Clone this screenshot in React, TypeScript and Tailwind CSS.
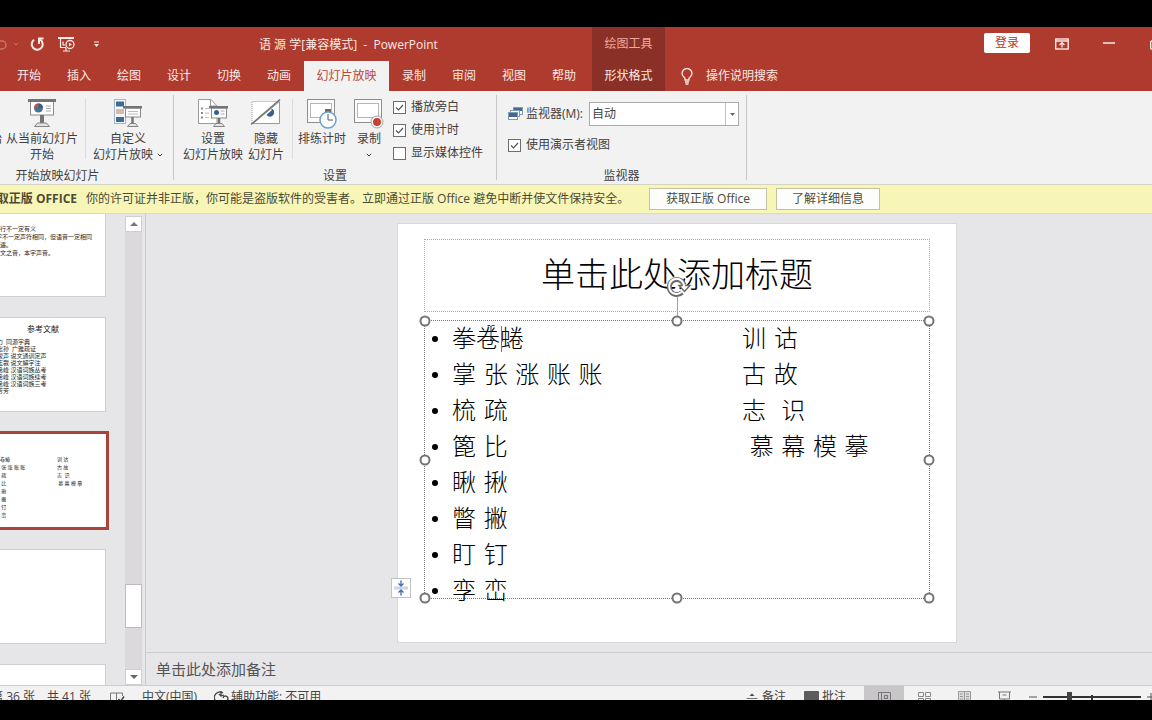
import React from "react";

const UI_FONT = "font-['Open_Sans','Noto_Sans_CJK_SC',sans-serif]";
const SLIDE_FONT = "font-['DejaVu_Serif','Noto_Sans_CJK_SC',serif]";

const TABS_BEFORE = ["开始", "插入", "绘图", "设计", "切换", "动画"];
const TABS_AFTER = ["录制", "审阅", "视图", "帮助"];

const LINES: { left: string; right?: string }[] = [
  { left: "拳卷蜷", right: "训 诂" },
  { left: "掌 张 涨 账 账", right: "古 故" },
  { left: "梳 疏", right: "志  识" },
  { left: "篦 比", right: " 慕 幕 模 摹" },
  { left: "瞅 揪" },
  { left: "瞥 撇" },
  { left: "盯 钉" },
  { left: "孪 峦" },
];

const REFERENCES = [
  "王力  同源字典",
  "王念孙  广雅疏证",
  "朱骏声 说文通训定声",
  "段玉裁 说文解字注",
  "张希峰 汉语词族丛考",
  "张希峰 汉语词族续考",
  "张希峰 汉语词族三考",
  "章芳芳",
];

function Chevron({ className = "" }: { className?: string }) {
  return (
    <svg viewBox="0 0 6 4" width="6" height="4" className={className} aria-hidden="true">
      <path d="M0.8 0.8 L3 3 L5.2 0.8" fill="none" stroke="currentColor" strokeWidth="1" />
    </svg>
  );
}

function Pie({ cx, cy, r }: { cx: number; cy: number; r: number }) {
  return (
    <g>
      <circle cx={cx} cy={cy} r={r} fill="#48729a" />
      <path d={`M${cx} ${cy} V${cy - r} A${r} ${r} 0 0 0 ${cx - r} ${cy} Z`} fill="#c5533c" />
      <path d={`M${cx} ${cy} V${cy - r} A${r} ${r} 0 0 1 ${cx + r} ${cy} Z`} fill="#35618c" />
    </g>
  );
}

function FromCurrentIcon() {
  return (
    <svg width="28" height="28" viewBox="0 0 28 28" aria-hidden="true">
      <rect x="2.5" y="2" width="23" height="14" fill="#fff" stroke="#8a8a8a" />
      <rect x="0" y="0" width="28" height="3" fill="#747474" />
      <Pie cx={10.5} cy={9} r={4.5} />
      <path d="M18 7h5M18 9.500h5M18 12h5" stroke="#aaa" />
      <rect x="12" y="16" width="4" height="8" fill="#747474" />
      <path d="M6.500 27.500 L9.500 24 H18.500 L21.500 27.500 Z" fill="#e3e3e3" stroke="#858585" />
    </svg>
  );
}

function CustomShowIcon() {
  return (
    <svg width="28" height="28" viewBox="0 0 28 28" aria-hidden="true">
      <rect x="0.5" y="0.5" width="11" height="24" fill="#f7f9fc" stroke="#9fb4ca" />
      <rect x="2" y="2.500" width="8" height="5" fill="#42698e" />
      <rect x="2" y="10" width="8" height="5" fill="#d6b9a6" />
      <rect x="2" y="18" width="8" height="5" fill="#42698e" />
      <rect x="11.5" y="9" width="15" height="9" fill="#fff" stroke="#8a8a8a" />
      <rect x="9" y="7" width="19" height="2.500" fill="#747474" />
      <path d="M14 12.500h10M14 15h10" stroke="#bbb" />
      <path d="M18.500 18v6" stroke="#747474" strokeWidth="2.500" />
      <path d="M13.500 27.500 l2.500-3h5.500l2.500 3z" fill="#e3e3e3" stroke="#858585" />
    </svg>
  );
}

function SetupIcon() {
  return (
    <svg width="30" height="28" viewBox="0 0 30 28" aria-hidden="true">
      <path d="M0.500 0.500H13L19 7V24.500H0.500Z" fill="#fff" stroke="#9a9a9a" />
      <path d="M12.500 0.500V7H19" fill="none" stroke="#9a9a9a" />
      <path d="M3 9.500h2M3 14h2M3 18.500h2" stroke="#8a8a8a" strokeWidth="2" />
      <path d="M7 9.500h4M7 14h4M7 18.500h4" stroke="#c0c0c0" />
      <rect x="13.500" y="9" width="15" height="10" fill="#fff" stroke="#8a8a8a" />
      <rect x="11" y="7" width="19" height="2.500" fill="#747474" />
      <circle cx="18.500" cy="13.500" r="2.500" fill="#35618c" />
      <path d="M22.500 12h4M22.500 15h4" stroke="#aaa" />
      <path d="M21 19v5" stroke="#747474" strokeWidth="2.500" />
      <path d="M15.500 27.500l2.500-3h6l2.500 3z" fill="#e3e3e3" stroke="#858585" />
    </svg>
  );
}

function HideIcon() {
  return (
    <svg width="30" height="28" viewBox="0 0 30 28" aria-hidden="true">
      <path d="M1 24V2.500H27" fill="#fff" stroke="#9a9a9a" strokeDasharray="1 1" />
      <path d="M2 24.500L28.500 2.500V24.500Z" fill="#fff" stroke="#9a9a9a" />
      <path d="M20.500 9.500a4.200 4.200 0 1 1-5 6.200L20.500 11.500Z" fill="#35618c" />
      <path d="M0 25.500L29 0.500" stroke="#747474" strokeWidth="1.500" />
    </svg>
  );
}

function RehearseIcon() {
  return (
    <svg width="30" height="30" viewBox="0 0 30 30" aria-hidden="true">
      <rect x="0.500" y="0.500" width="27" height="23" fill="#fbfbfb" stroke="#8e8e8e" />
      <rect x="3.500" y="4.500" width="21" height="14" fill="#fff" stroke="#b5b5b5" />
      <rect x="18" y="10" width="6" height="3" fill="#6b6b6b" />
      <circle cx="21" cy="21" r="8" fill="#fff" stroke="#6fa0c8" strokeWidth="1.500" />
      <path d="M21 15v6h5" fill="none" stroke="#555" />
    </svg>
  );
}

function RecordIcon() {
  return (
    <svg width="30" height="30" viewBox="0 0 30 30" aria-hidden="true">
      <rect x="0.500" y="0.500" width="27" height="23" fill="#fbfbfb" stroke="#8e8e8e" />
      <rect x="3.500" y="4.500" width="21" height="14" fill="#fff" stroke="#b5b5b5" />
      <circle cx="23" cy="23" r="6" fill="#f8f8f8" stroke="#a8a8a8" />
      <circle cx="23" cy="23" r="4" fill="#c8402f" />
    </svg>
  );
}

function RibbonButton({ icon, lines, width, menu }: { icon: React.ReactNode; lines: string[]; width: string; menu?: "side" | "below" }) {
  return (
    <button type="button" className={`flex shrink-0 flex-col items-center whitespace-nowrap ${width}`}>
      <span className="flex h-8 items-start justify-center">{icon}</span>
      {lines.map((line, i) => (
        <span key={line} className="flex h-4 items-center gap-1 leading-4">
          {line}
          {menu === "side" && i === lines.length - 1 && <Chevron />}
        </span>
      ))}
      {menu === "below" && <Chevron className="mt-1.5" />}
    </button>
  );
}

function Check({ id, label, checked }: { id: string; label: string; checked?: boolean }) {
  return (
    <div className="flex items-center gap-[5px]">
      <span className="grid size-[13px] place-items-center">
        <input
          id={id}
          type="checkbox"
          defaultChecked={checked}
          className="peer col-start-1 row-start-1 size-[13px] appearance-none border border-[#6d6d6d] bg-white"
        />
        <svg viewBox="0 0 13 13" className="pointer-events-none col-start-1 row-start-1 hidden size-[13px] peer-checked:block" aria-hidden="true">
          <path d="M3 6.500L5.500 9L10 4" fill="none" stroke="#555" strokeWidth="1.200" />
        </svg>
      </span>
      <label htmlFor={id} className="whitespace-nowrap leading-4">{label}</label>
    </div>
  );
}

function Header() {
  return (
    <header className="shrink-0 overflow-hidden bg-[#ae3b2d] text-xs text-[#fbe9e6]">
      <div className="flex h-[34px]">
        <div className="flex w-[259px] shrink-0 items-center">
          <button type="button" aria-label="撤消" className="-ml-2 w-4 text-[#c9776c]">
            <svg width="16" height="14" viewBox="0 0 16 14" aria-hidden="true">
              <path d="M3 4h7a4 4 0 0 1 0 8H8M6 1L3 4l3 3" fill="none" stroke="currentColor" strokeWidth="1.500" />
            </svg>
          </button>
          <Chevron className="ml-[5px] text-[#c9776c]" />
          <button type="button" aria-label="重复" className="ml-[11px]">
            <svg width="15" height="15" viewBox="0 0 15 15" aria-hidden="true">
              <path d="M4 2.800A5.500 5.500 0 1 0 10 2.500" fill="none" stroke="currentColor" strokeWidth="2" />
              <path d="M13.500 1.500H9V7" fill="none" stroke="currentColor" strokeWidth="2" />
            </svg>
          </button>
          <button type="button" aria-label="从头开始放映" className="ml-[13px]">
            <svg width="18" height="15" viewBox="0 0 18 15" fill="none" stroke="currentColor" aria-hidden="true">
              <path d="M0 1h16" strokeWidth="2" />
              <path d="M2.500 2v8.500H8M5 4.500v3.500h2M8 11v2.500M5 14h7" strokeWidth="1.200" />
              <circle cx="12" cy="7.500" r="4" strokeWidth="1.300" />
              <path d="M11 5.700v3.600l3-1.800z" fill="currentColor" stroke="none" />
            </svg>
          </button>
          <button type="button" aria-label="自定义快速访问工具栏" className="ml-[17px]">
            <svg width="7" height="7" viewBox="0 0 7 7" fill="currentColor" aria-hidden="true">
              <path d="M1 0.500h5v1H1zM1 3h5L3.500 6z" />
            </svg>
          </button>
        </div>
        <h1 className="flex w-[333px] shrink-0 items-center whitespace-pre pt-px">语 源 学[兼容模式]  -  PowerPoint</h1>
        <div className="flex w-[73px] shrink-0 items-center justify-center bg-[#8b3026] text-[#eba99f]">绘图工具</div>
        <div className="-mr-3 flex flex-1 items-center justify-end">
          <button type="button" className="mb-0.5 h-5 w-[46px] rounded-xs bg-white text-[#ae3b2d]">登录</button>
          <button type="button" aria-label="功能区显示选项" className="ml-[25px]">
            <svg width="14" height="12" viewBox="0 0 14 12" fill="none" stroke="currentColor" aria-hidden="true">
              <rect x="0.700" y="1" width="12.500" height="10" strokeWidth="1.400" />
              <path d="M1 3h12M7 9.500V5M4.500 7L7 4.700L9.500 7" strokeWidth="1.300" />
            </svg>
          </button>
          <button type="button" aria-label="最小化" className="ml-[34px] mb-0.5">
            <svg width="12" height="2" viewBox="0 0 12 2" aria-hidden="true"><path d="M0 1h12" stroke="currentColor" strokeWidth="1.500" /></svg>
          </button>
          <button type="button" aria-label="还原" className="ml-[35px]">
            <svg width="14" height="12" viewBox="0 0 14 12" fill="none" stroke="currentColor" aria-hidden="true">
              <rect x="0.700" y="3" width="8" height="8" rx="1" strokeWidth="1.400" />
              <path d="M3 3V1h8v8H9" strokeWidth="1.400" />
            </svg>
          </button>
        </div>
      </div>
      <nav className="flex h-[30px] pl-1">
        {TABS_BEFORE.map((t) => <button key={t} type="button" className="w-[50px] shrink-0">{t}</button>)}
        <button type="button" className="w-[85px] shrink-0 bg-[#f3f2f3] text-[#b5483b]">幻灯片放映</button>
        {TABS_AFTER.map((t) => <button key={t} type="button" className="w-[50px] shrink-0">{t}</button>)}
        <button type="button" className="ml-[3px] w-[73px] shrink-0 bg-[#8b3026]">形状格式</button>
        <button type="button" className="ml-4 flex items-center gap-[13px]">
          <svg width="12" height="17" viewBox="0 0 12 17" fill="none" stroke="currentColor" strokeWidth="1.300" aria-hidden="true">
            <path d="M4 12v-1.500C4 9 1 8.500 1 5.500a5 5 0 0 1 10 0C11 8.500 8 9 8 10.500V12zM4 14h4M4.500 16h3" />
          </svg>
          操作说明搜索
        </button>
      </nav>
    </header>
  );
}

function GroupLabel({ children }: { children: React.ReactNode }) {
  return <div className="mt-auto text-center leading-4">{children}</div>;
}

function Divider() {
  return <div className="mx-1 h-[60px] w-px shrink-0 bg-[#dcdcdc]" />;
}

function Ribbon() {
  return (
    <section className="flex h-[94px] shrink-0 overflow-hidden border-b border-[#d5d3c6] bg-[#f3f2f3] text-xs text-[#3f3f3f]">
      <div className="-ml-[58px] flex w-[231px] shrink-0 flex-col pt-2">
        <div className="flex">
          <RibbonButton icon={<FromCurrentIcon />} lines={["从头开始"]} width="w-[61px] pr-px pl-3" />
          <RibbonButton icon={<FromCurrentIcon />} lines={["从当前幻灯片", "开始"]} width="w-[78px]" />
          <Divider />
          <RibbonButton icon={<CustomShowIcon />} lines={["自定义", "幻灯片放映"]} width="w-[76px]" menu="side" />
        </div>
        <GroupLabel>开始放映幻灯片</GroupLabel>
      </div>
      <div className="my-1 w-px shrink-0 bg-[#c6c6c8]" />
      <div className="flex w-[322px] shrink-0 flex-col pt-2">
        <div className="flex pl-2">
          <RibbonButton icon={<SetupIcon />} lines={["设置", "幻灯片放映"]} width="w-[62px]" />
          <RibbonButton icon={<HideIcon />} lines={["隐藏", "幻灯片"]} width="w-[44px]" />
          <Divider />
          <RibbonButton icon={<RehearseIcon />} lines={["排练计时"]} width="w-[50px]" />
          <RibbonButton icon={<RecordIcon />} lines={["录制"]} width="w-[44px]" menu="below" />
          <div className="ml-0.5 flex flex-col gap-[7px]">
            <Check id="narration" label="播放旁白" checked />
            <Check id="timings" label="使用计时" checked />
            <Check id="media" label="显示媒体控件" />
          </div>
        </div>
        <GroupLabel>设置</GroupLabel>
      </div>
      <div className="my-1 w-px shrink-0 bg-[#c6c6c8]" />
      <div className="flex w-[249px] shrink-0 flex-col pt-[11px]">
        <div className="flex items-center pl-[11px]">
          <svg width="16" height="14" viewBox="0 0 16 14" aria-hidden="true">
            <rect x="5.500" y="0.500" width="9" height="7" fill="#fff" stroke="#7f9bb5" />
            <rect x="6" y="1" width="8" height="3" fill="#42698e" />
            <rect x="2.500" y="3.500" width="9" height="6" fill="#fff" stroke="#7f9bb5" />
            <rect x="0.500" y="5.500" width="9" height="7" fill="#fff" stroke="#7f9bb5" />
            <rect x="1" y="6" width="8" height="4" fill="#42698e" />
          </svg>
          <label htmlFor="monitor" className="ml-0.5 w-[63px] whitespace-nowrap">监视器(M):</label>
          <div className="grid h-6 w-[150px] border border-[#ababab] bg-white">
            <select id="monitor" className="col-start-1 row-start-1 appearance-none bg-transparent px-0.5 outline-none">
              <option>自动</option>
            </select>
            <span className="pointer-events-none col-start-1 row-start-1 flex w-[13px] items-center justify-center justify-self-end border-l border-[#c0c0c0]">
              <svg width="5" height="3" viewBox="0 0 5 3" aria-hidden="true"><path d="M0 0h5L2.500 3z" fill="#666" /></svg>
            </span>
          </div>
        </div>
        <div className="mt-[11px] pl-[11px]">
          <Check id="presenter" label="使用演示者视图" checked />
        </div>
        <GroupLabel>监视器</GroupLabel>
      </div>
      <div className="my-1 w-px shrink-0 bg-[#c6c6c8]" />
    </section>
  );
}

function LicenseBar() {
  return (
    <section className="flex h-[29px] shrink-0 items-center overflow-hidden whitespace-nowrap border-b border-[#e0dda8] bg-[#f8f6b6] text-xs text-[#4c4a35]">
      <div className="flex w-[77px] shrink-0 justify-end font-bold">获取正版 OFFICE</div>
      <p className="ml-[9px] w-[563px] shrink-0">你的许可证并非正版，你可能是盗版软件的受害者。立即通过正版 Office 避免中断并使文件保持安全。</p>
      <button type="button" className="h-[22px] w-[118px] shrink-0 border border-[#c4c2a4] bg-[#fdfdfb]">获取正版 Office</button>
      <button type="button" className="ml-[9px] h-[22px] w-[104px] shrink-0 border border-[#c4c2a4] bg-[#fdfdfb]">了解详细信息</button>
    </section>
  );
}

const THUMB = "-ml-5 h-[95px] w-[126px] shrink-0 overflow-hidden border border-[#cfcfd1] bg-white text-[6px] leading-[8px] text-[#222]";

function SlidePanel() {
  return (
    <aside className="flex w-[146px] shrink-0 border-r border-[#cdcbce]">
      <div className="flex flex-1 flex-col gap-5 overflow-hidden">
        <div className={`${THUMB} -mt-3 pt-[22px] whitespace-nowrap`}>
          <p className="pl-[13px]">声行不一定有义</p>
          <p className="pl-[9px]">源字不一定声符相同，但语音一定相同</p>
          <p className="pl-[13px]">相遇。</p>
          <p className="pl-[13px]">右文之音，本字声音。</p>
        </div>
        <div className={`${THUMB} pt-[7px] whitespace-nowrap`}>
          <p className="pb-1.5 text-center text-[8px]">参考文献</p>
          {REFERENCES.map((r) => <p key={r} className="h-[7px] whitespace-pre pl-2.5 leading-[7px]">{r}</p>)}
        </div>
        <div className="-my-px -ml-5 h-[99px] w-[129px] shrink-0 overflow-hidden border-[3px] border-[#a8443a] bg-white pt-[21px] pl-3 text-[5px] leading-[8px] text-[#222]">
          {LINES.map((l) => (
            <div key={l.left} className="flex whitespace-pre">
              <span className="w-[62px]">{l.left}</span>
              <span>{l.right}</span>
            </div>
          ))}
        </div>
        <div className={THUMB} />
        <div className={THUMB} />
      </div>
      <div className="mt-0.5 mr-[3px] ml-[15px] flex w-[17px] shrink-0 flex-col bg-[#dbd9dc]">
        <button type="button" aria-label="向上滚动" className="flex h-4 items-center justify-center border border-[#d0ced1] bg-white">
          <svg width="8" height="4" viewBox="0 0 8 4" aria-hidden="true"><path d="M0 4h8L4 0z" fill="#777" /></svg>
        </button>
        <div className="flex-1" />
        <div className="h-[44px] border border-[#bcbabd] bg-white" />
        <div className="h-[41px]" />
        <button type="button" aria-label="向下滚动" className="flex h-4 items-center justify-center border border-[#d0ced1] bg-white">
          <svg width="8" height="4" viewBox="0 0 8 4" aria-hidden="true"><path d="M0 0h8L4 4z" fill="#666" /></svg>
        </button>
      </div>
    </aside>
  );
}

const HANDLE = "absolute size-[11px] -translate-x-1/2 -translate-y-1/2 rounded-full border-2 border-[#747474] bg-white";

function Slide() {
  return (
    <div className="relative flex aspect-[4/3] w-[560px] shrink-0 flex-col border border-[#d9d7db] bg-white px-[26px] pt-[15px]">
      <div className={`flex h-[73px] shrink-0 items-center justify-center border border-dotted border-[#a8a8a8] text-[34px] font-light text-black ${SLIDE_FONT}`}>
        单击此处添加标题
      </div>
      <div className="relative mt-2 h-[279px] shrink-0 border border-dotted border-[#777]">
        <ul className={`text-2xl font-light text-black ${SLIDE_FONT}`}>
          {LINES.map((l) => (
            <li key={l.left} className="flex h-9 items-center whitespace-pre leading-9">
              <span className="ml-[7px] size-1.5 rounded-full bg-black" />
              <span className="ml-3.5 w-[290px]">{l.left}</span>
              <span>{l.right}</span>
            </li>
          ))}
        </ul>
        <span className="absolute top-[5px] left-[76px] h-[26px] w-px bg-[#777]" />
        <svg className="absolute top-1 left-[62px]" width="8" height="16" viewBox="0 0 8 16" fill="none" stroke="#333" aria-hidden="true">
          <path d="M0.500 0.500h2.500l1 1l1-1h2.500M4 1v14M0.500 15.500h2.500l1-1l1 1h2.500" />
        </svg>
        <span className="absolute -top-6 left-1/2 h-5 w-px bg-[#a0a0a0]" />
        <svg className="absolute -top-[45px] left-1/2 -translate-x-1/2" width="28" height="22" viewBox="0 0 28 22" fill="none" aria-hidden="true">
          <path d="M19 16.500A7.500 7.500 0 1 1 21 9" stroke="#6c6c6c" strokeWidth="5" />
          <path d="M16 9.500h11l-5.500 6z" fill="#fff" stroke="#6c6c6c" strokeWidth="1.500" />
          <path d="M18.500 16A7.500 7.500 0 1 1 21 11" stroke="#fff" strokeWidth="2" />
        </svg>
        <span className={`${HANDLE} top-0 left-0`} />
        <span className={`${HANDLE} top-0 left-1/2`} />
        <span className={`${HANDLE} top-0 left-full`} />
        <span className={`${HANDLE} top-1/2 left-0`} />
        <span className={`${HANDLE} top-1/2 left-full`} />
        <span className={`${HANDLE} top-full left-0`} />
        <span className={`${HANDLE} top-full left-1/2`} />
        <span className={`${HANDLE} top-full left-full`} />
        <button type="button" aria-label="自动调整选项" className="absolute bottom-0 -left-[34px] flex size-5 items-center justify-center border border-[#c3c3c6] bg-white">
          <svg width="14" height="16" viewBox="0 0 14 16" fill="none" aria-hidden="true">
            <rect x="0" y="6.500" width="14" height="3" fill="#cfd6e2" />
            <path d="M7 0.500V6M4.500 3.500L7 6l2.500-2.500M7 15.500V10M4.500 12.500L7 10l2.500 2.500" stroke="#4470bd" strokeWidth="1.400" />
          </svg>
        </button>
      </div>
    </div>
  );
}

function StatusBar() {
  return (
    <footer className="h-[14px] shrink-0 overflow-hidden bg-[#f3f2f3] text-xs text-[#444]">
      <div className="flex h-[22px] items-center whitespace-nowrap">
        <span className="flex w-[35px] shrink-0 justify-end">第 36 张</span>
        <span className="ml-3 w-[63px] shrink-0">共 41 张</span>
        <svg width="16" height="13" viewBox="0 0 16 13" fill="none" stroke="#777" aria-hidden="true">
          <path d="M6.500 2v10M6.500 2H0.500v9h5l1 1l1-1h1M6.500 2h6v3" />
          <path d="M8.500 8L10.500 10.500L14 5.500" stroke="#444" strokeWidth="1.500" />
        </svg>
        <span className="ml-4 w-[72px] shrink-0">中文(中国)</span>
        <svg width="15" height="15" viewBox="0 0 15 15" fill="none" stroke="#444" strokeWidth="1.300" aria-hidden="true">
          <path d="M9 3A5.500 5.500 0 1 0 6 13M7 1v5M5 4l2 2l3-1M9 8a2.500 2.500 0 1 1 2.500 3v2" />
        </svg>
        <span className="ml-0.5">辅助功能: 不可用</span>
        <div className="-mr-1 ml-auto flex h-full shrink-0 items-center">
          <button type="button" className="flex items-center gap-1">
            <svg width="12" height="11" viewBox="0 0 12 11" aria-hidden="true"><path d="M3.500 4L6 1.500L8.500 4z" fill="#444" /><path d="M0.500 6.500h11M0.500 9.500h11" stroke="#777" /></svg>
            备注
          </button>
          <button type="button" className="ml-[18px] flex items-center gap-[3px]">
            <svg width="15" height="13" viewBox="0 0 15 13" aria-hidden="true"><path d="M1 0h13a1 1 0 0 1 1 1v9H6l-3 3v-3H0V1a1 1 0 0 1 1-1z" fill="#5c5c5c" /></svg>
            批注
          </button>
          <button type="button" aria-label="普通视图" className="ml-[18px] flex h-full w-10 items-center justify-center bg-[#c8c6c9]">
            <svg width="13" height="11" viewBox="0 0 13 11" fill="none" stroke="#777" aria-hidden="true"><path d="M0.500 0.500h12v10h-12zM3.500 0.500v10" /><rect x="6.500" y="3.500" width="3" height="3" /></svg>
          </button>
          <button type="button" aria-label="幻灯片浏览" className="flex w-10 justify-center">
            <svg width="13" height="11" viewBox="0 0 13 11" fill="none" stroke="#888" aria-hidden="true"><path d="M0.500 0.500h5v4h-5zM7.500 0.500h5v4h-5zM0.500 6.500h5v4h-5zM7.500 6.500h5v4h-5z" /></svg>
          </button>
          <button type="button" aria-label="阅读视图" className="flex w-10 justify-center">
            <svg width="13" height="12" viewBox="0 0 13 12" fill="#dedede" stroke="#999" aria-hidden="true"><path d="M0.500 0.500h6v10h-6zM6.500 0.500h6v10h-6z" /><path d="M2 3h3M2 5.500h3M2 8h3M8 3h3M8 5.500h3M8 8h3" /></svg>
          </button>
          <button type="button" aria-label="幻灯片放映视图" className="flex w-10 justify-center">
            <svg width="13" height="12" viewBox="0 0 13 12" fill="none" stroke="#777" aria-hidden="true"><path d="M0 1h13M1.500 1v7h10v-7M6.500 8v3M4 11h5M4.500 4h4" /></svg>
          </button>
          <button type="button" aria-label="缩小" className="ml-1 flex w-2.5 justify-center">
            <svg width="8" height="2" viewBox="0 0 8 2" aria-hidden="true"><path d="M0 1h8" stroke="#555" /></svg>
          </button>
          <div className="ml-[5px] grid w-[98px] items-center">
            <span className="col-start-1 row-start-1 h-[5px] w-0.5 justify-self-center bg-[#333]" />
            <input
              type="range"
              aria-label="显示比例"
              defaultValue={26}
              className="col-start-1 row-start-1 h-[11px] w-full appearance-none bg-transparent [&::-webkit-slider-runnable-track]:h-0.5 [&::-webkit-slider-runnable-track]:bg-[#333] [&::-webkit-slider-thumb]:-mt-1 [&::-webkit-slider-thumb]:h-[11px] [&::-webkit-slider-thumb]:w-[5px] [&::-webkit-slider-thumb]:appearance-none [&::-webkit-slider-thumb]:bg-[#444]"
            />
          </div>
          <button type="button" aria-label="放大" className="ml-[5px] flex w-2.5 justify-center">
            <svg width="8" height="8" viewBox="0 0 8 8" aria-hidden="true"><path d="M0 4h8M4 0v8" stroke="#555" /></svg>
          </button>
        </div>
      </div>
    </footer>
  );
}

export default function App() {
  return (
    <div className={`flex h-screen min-h-[640px] flex-col overflow-hidden bg-black pt-[27px] pb-5 ${UI_FONT}`}>
      <Header />
      <Ribbon />
      <LicenseBar />
      <div className="flex min-h-0 flex-1 border-b border-[#cfcdd0] bg-[#e6e6e8]">
        <SlidePanel />
        <main className="flex min-w-0 flex-1 flex-col">
          <div className="min-h-0 flex-1 overflow-hidden pt-[9px] pl-[251px]">
            <Slide />
          </div>
          <div className="flex h-[33px] shrink-0 items-center border-t border-[#cdcbce] pl-[10px] text-[15px] text-[#555]">
            单击此处添加备注
          </div>
        </main>
      </div>
      <StatusBar />
    </div>
  );
}
